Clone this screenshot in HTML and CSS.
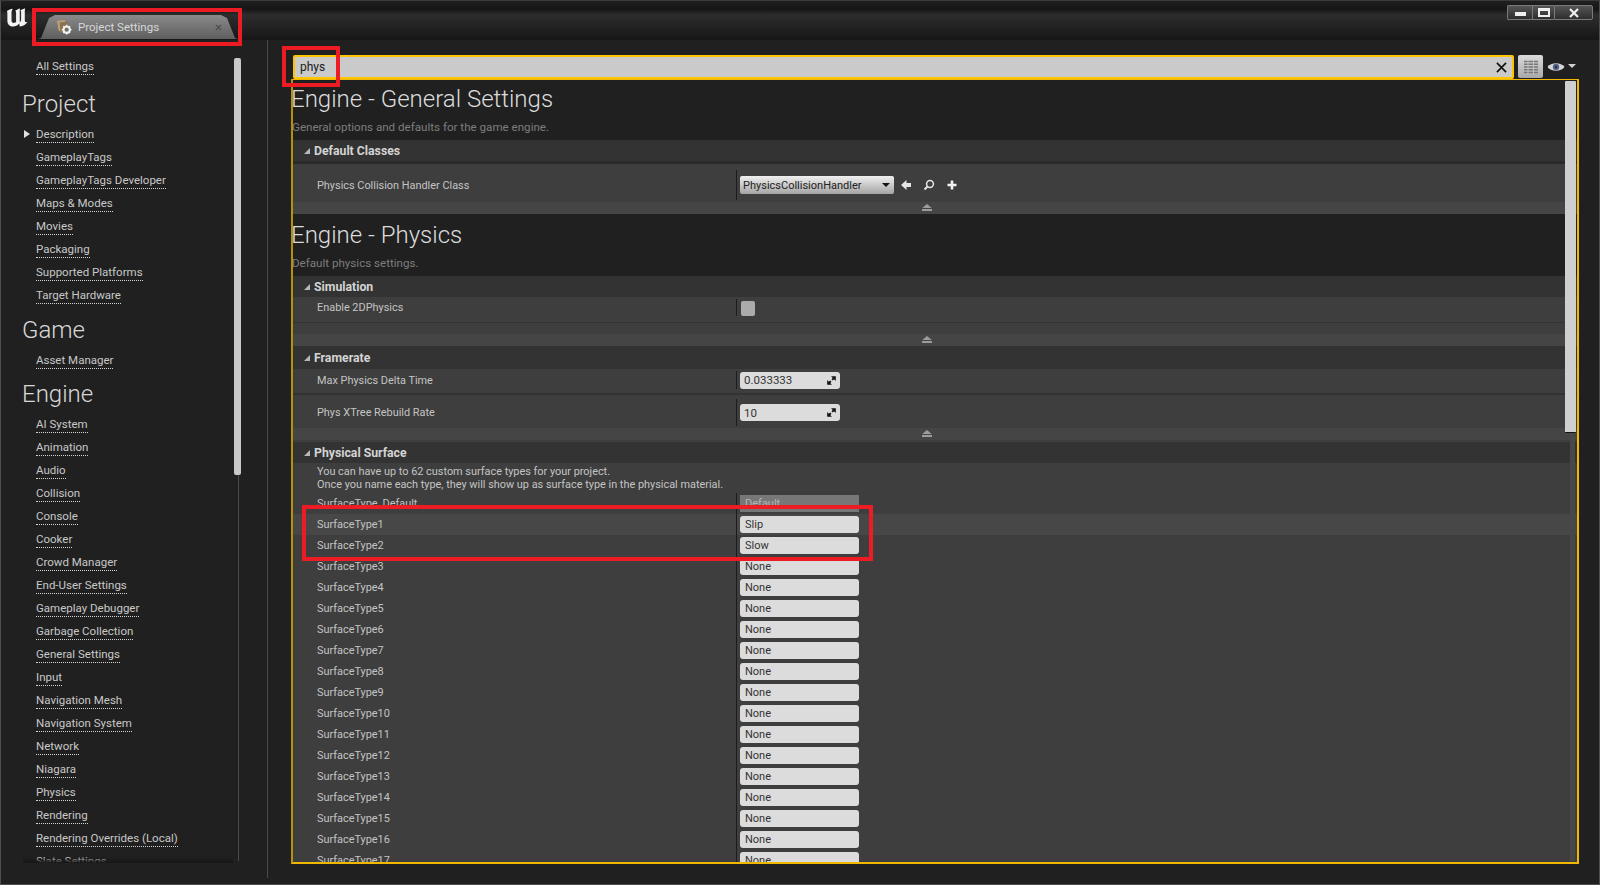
FILE: index.html
```html
<!DOCTYPE html>
<html lang="en">
<head>
<meta charset="utf-8">
<title>Project Settings</title>
<link rel="stylesheet" href="styles.css">
</head>
<body>
<div class="window">
  <header class="titlebar">
    <svg class="logo" viewBox="0 0 24 20"><path d="M1 3C3 1.500 5 1 7.500 0.500C6.500 2 6 3 6 5V13C6 15 7 16 8.500 16C9.500 16 10.500 15.500 11 15V5C11 3.500 10.500 3 10 2.500L15 0V15.500C16 14.500 16.500 13.500 16.500 12V4C16.500 3 16 2.500 15.500 2L21 0C20.500 1.500 20.500 3 20.500 5V13C20.500 15 21.500 15.500 23.500 15C22 17.500 19 19.500 15 19.800L14.500 16.500C13 18.500 10 19.800 7.500 19.800C3.500 19.800 1.500 17 1.500 13.500V6C1.500 5 1.500 4 1 3Z" fill="#f4f4f4"/></svg>
    <div class="tab">
      <svg class="tab-icon" viewBox="0 0 18 18">
        <path d="M1 2L10 1L14 6L13 10L6 16L3 13Z" fill="#8a7350"/>
        <path d="M1 2L10 1L11 3L4 4L5 14L3 13Z" fill="#b8a27c"/>
        <circle cx="12" cy="12" r="3.600" fill="none" stroke="#f2f2f2" stroke-width="2.400"/>
        <path d="M12 6.500V8M12 16V17.500M6.500 12H8M16 12H17.500M8.200 8.200L9.200 9.200M14.800 14.800L15.800 15.800M15.800 8.200L14.800 9.200M9.200 14.800L8.200 15.800" stroke="#f2f2f2" stroke-width="1.500"/>
      </svg>
      <span class="tab-label">Project Settings</span>
      <svg class="tab-close" viewBox="0 0 8 8"><path d="M1 1L7 7M7 1L1 7" stroke="#4a4a4a" stroke-width="1.200"/></svg>
    </div>
    <div class="window-controls">
      <div class="wc wc-min"><span class="min-glyph"></span></div>
      <div class="wc wc-max"><span class="max-glyph"></span></div>
      <div class="wc wc-close"><svg viewBox="0 0 10 10" class="close-glyph"><path d="M1 1L9 9M9 1L1 9" stroke="#f0f0f0" stroke-width="2.200"/></svg></div>
    </div>
  </header>

  <div class="body">
    <aside class="sidebar">
      <nav class="nav">
        <a class="nav-item">All Settings</a>
        <h2 class="nav-heading nav-heading-first">Project</h2>
        <a class="nav-item nav-current">Description</a>
        <a class="nav-item">GameplayTags</a>
        <a class="nav-item">GameplayTags Developer</a>
        <a class="nav-item">Maps &amp; Modes</a>
        <a class="nav-item">Movies</a>
        <a class="nav-item">Packaging</a>
        <a class="nav-item">Supported Platforms</a>
        <a class="nav-item">Target Hardware</a>
        <h2 class="nav-heading">Game</h2>
        <a class="nav-item">Asset Manager</a>
        <h2 class="nav-heading nav-heading-tight">Engine</h2>
        <a class="nav-item">AI System</a>
        <a class="nav-item">Animation</a>
        <a class="nav-item">Audio</a>
        <a class="nav-item">Collision</a>
        <a class="nav-item">Console</a>
        <a class="nav-item">Cooker</a>
        <a class="nav-item">Crowd Manager</a>
        <a class="nav-item">End-User Settings</a>
        <a class="nav-item">Gameplay Debugger</a>
        <a class="nav-item">Garbage Collection</a>
        <a class="nav-item">General Settings</a>
        <a class="nav-item">Input</a>
        <a class="nav-item">Navigation Mesh</a>
        <a class="nav-item">Navigation System</a>
        <a class="nav-item">Network</a>
        <a class="nav-item">Niagara</a>
        <a class="nav-item">Physics</a>
        <a class="nav-item">Rendering</a>
        <a class="nav-item">Rendering Overrides (Local)</a>
        <a class="nav-item">Slate Settings</a>
      </nav>
      <div class="nav-track"><div class="nav-thumb"></div></div>
    </aside>

    <main class="content">
      <div class="search-row">
        <div class="search">
          <span class="search-text">phys</span>
          <svg class="search-clear" viewBox="0 0 12 12"><path d="M1 1L11 11M11 1L1 11" stroke="#111" stroke-width="1.800"/></svg>
        </div>
        <div class="grid-btn">
          <svg viewBox="0 0 14 14" class="grid-glyph"><path d="M0 1.500H14M0 4.300H14M0 7H14M0 9.800H14M0 12.500H14" stroke="#777" stroke-width="1.600"/><path d="M4 0V14M9.500 0V14" stroke="#ccc" stroke-width="0.800"/></svg>
        </div>
        <svg class="eye" viewBox="0 0 18 10"><path d="M0.500 5C4 0 14 0 17.500 5C14 10 4 10 0.500 5Z" fill="#d6d6d6"/><circle cx="9" cy="5" r="3.200" fill="#56648a"/><circle cx="9" cy="5" r="1.200" fill="#20283c"/></svg>
        <span class="eye-caret"></span>
      </div>

      <div class="panel">
        <section class="category category-first">
          <h1 class="cat-title">Engine - General Settings</h1>
          <p class="cat-sub">General options and defaults for the game engine.</p>
        </section>
        <div class="group-head group-head-shadow"><span class="caret"></span>Default Classes</div>
        <div class="row row-class">
          <div class="label">Physics Collision Handler Class</div>
          <div class="value">
            <div class="combo"><span>PhysicsCollisionHandler</span><i class="combo-caret"></i></div>
            <svg class="mini" viewBox="0 0 12 12"><path d="M1 6L6.500 1V4H11V8H6.500V11Z" fill="#e6e6e6"/></svg>
            <svg class="mini" viewBox="0 0 12 12"><circle cx="7" cy="5" r="3.400" fill="none" stroke="#e6e6e6" stroke-width="1.500"/><path d="M4.500 7.500L1.500 10.500" stroke="#e6e6e6" stroke-width="2"/></svg>
            <svg class="mini" viewBox="0 0 12 12"><path d="M6 1.500V10.500M1.500 6H10.500" stroke="#f2f2f2" stroke-width="2.600"/></svg>
          </div>
        </div>
        <div class="expander"><span class="collapse-glyph"></span></div>

        <section class="category">
          <h1 class="cat-title">Engine - Physics</h1>
          <p class="cat-sub">Default physics settings.</p>
        </section>
        <div class="group-head"><span class="caret"></span>Simulation</div>
        <div class="row row-check">
          <div class="label">Enable 2DPhysics</div>
          <div class="value"><span class="checkbox"></span></div>
        </div>
        <div class="row-gap"></div>
        <div class="expander"><span class="collapse-glyph"></span></div>

        <div class="group-head group-head-tall"><span class="caret"></span>Framerate</div>
        <div class="row row-num row-lined">
          <div class="label">Max Physics Delta Time</div>
          <div class="value"><div class="num"><span>0.033333</span><svg class="num-glyph" viewBox="0 0 10 10"><path d="M9.800 0.200V5.500L7.900 3.600L6.500 5L5 3.500L6.400 2.100L4.500 0.200ZM0.200 9.800V4.500L2.100 6.400L3.500 5L5 6.500L3.600 7.900L5.500 9.800Z" fill="#111"/></svg></div></div>
        </div>
        <div class="row row-num-tall">
          <div class="label">Phys XTree Rebuild Rate</div>
          <div class="value"><div class="num"><span>10</span><svg class="num-glyph" viewBox="0 0 10 10"><path d="M9.800 0.200V5.500L7.900 3.600L6.500 5L5 3.500L6.400 2.100L4.500 0.200ZM0.200 9.800V4.500L2.100 6.400L3.500 5L5 6.500L3.600 7.900L5.500 9.800Z" fill="#111"/></svg></div></div>
        </div>
        <div class="expander expander-spaced"><span class="collapse-glyph"></span></div>

        <div class="group-head"><span class="caret"></span>Physical Surface</div>
        <div class="note">You can have up to 62 custom surface types for your project.<br>Once you name each type, they will show up as surface type in the physical material.</div>
        <div class="row row-surface"><div class="label">SurfaceType_Default</div><div class="value"><div class="field field-off">Default</div></div></div>
        <div class="row row-surface row-hover"><div class="label">SurfaceType1</div><div class="value"><div class="field">Slip</div></div></div>
        <div class="row row-surface"><div class="label">SurfaceType2</div><div class="value"><div class="field">Slow</div></div></div>
        <div class="row row-surface"><div class="label">SurfaceType3</div><div class="value"><div class="field">None</div></div></div>
        <div class="row row-surface"><div class="label">SurfaceType4</div><div class="value"><div class="field">None</div></div></div>
        <div class="row row-surface"><div class="label">SurfaceType5</div><div class="value"><div class="field">None</div></div></div>
        <div class="row row-surface"><div class="label">SurfaceType6</div><div class="value"><div class="field">None</div></div></div>
        <div class="row row-surface"><div class="label">SurfaceType7</div><div class="value"><div class="field">None</div></div></div>
        <div class="row row-surface"><div class="label">SurfaceType8</div><div class="value"><div class="field">None</div></div></div>
        <div class="row row-surface"><div class="label">SurfaceType9</div><div class="value"><div class="field">None</div></div></div>
        <div class="row row-surface"><div class="label">SurfaceType10</div><div class="value"><div class="field">None</div></div></div>
        <div class="row row-surface"><div class="label">SurfaceType11</div><div class="value"><div class="field">None</div></div></div>
        <div class="row row-surface"><div class="label">SurfaceType12</div><div class="value"><div class="field">None</div></div></div>
        <div class="row row-surface"><div class="label">SurfaceType13</div><div class="value"><div class="field">None</div></div></div>
        <div class="row row-surface"><div class="label">SurfaceType14</div><div class="value"><div class="field">None</div></div></div>
        <div class="row row-surface"><div class="label">SurfaceType15</div><div class="value"><div class="field">None</div></div></div>
        <div class="row row-surface"><div class="label">SurfaceType16</div><div class="value"><div class="field">None</div></div></div>
        <div class="row row-surface"><div class="label">SurfaceType17</div><div class="value"><div class="field">None</div></div></div>
        <div class="panel-track"></div>
        <div class="panel-thumb"></div>
      </div>
    </main>
  </div>

  <div class="callout callout-tab"></div>
  <div class="callout callout-search"></div>
  <div class="callout callout-rows"></div>
</div>
</body>
</html>
```

FILE: styles.css
```css
* { box-sizing: border-box; }

html, body {
  margin: 0;
  height: 885px;
  overflow: hidden;
  background: #1f1f1f;
  font-family: Roboto, "Liberation Sans", sans-serif;
}

.window {
  position: relative;
  width: 1600px;
  height: 885px;
  display: flex;
  flex-direction: column;
  background: #202020;
  border: 1px solid #4e4e4e;
  border-top-color: #3a3a3a;
  overflow: hidden;
}

/* Title bar */
.titlebar {
  height: 39px;
  flex: none;
  display: flex;
  align-items: flex-start;
  background: linear-gradient(#202020 0, #161616 8px, #2d2d2d 14px, #171717 38px);
}

.logo {
  width: 22px;
  height: 19px;
  margin: 7px 0 0 5px;
  flex: none;
}

.tab {
  width: 200px;
  height: 24px;
  margin: 14px 0 0 10px;
  flex: none;
  display: flex;
  align-items: center;
  padding: 0 12px 0 18px;
  background: linear-gradient(#8a8a8a, #5e5e5e);
  clip-path: polygon(0 100%, 3px 96%, 11px 12%, 17px 0, 183px 0, 189px 12%, 197px 96%, 100% 100%);
}

.tab-icon { width: 16px; height: 16px; flex: none; }

.tab-label {
  margin-left: 6px;
  flex: 1;
  font-size: 11.500px;
  color: #d8d8d8;
}

.tab-close { width: 7px; height: 7px; flex: none; margin-right: 4px; }

.window-controls {
  margin: 4px 6px 0 auto;
  display: flex;
  height: 15px;
  flex: none;
}

.wc {
  display: flex;
  align-items: center;
  justify-content: center;
  background: linear-gradient(#555, #2e2e2e);
  border: 1px solid #7a7a7a;
  border-right-width: 0;
}

.wc-min { width: 25px; border-radius: 2px 0 0 2px; }
.wc-max { width: 22px; }
.wc-close { width: 39px; border-right-width: 1px; border-radius: 0 2px 2px 0; }

.min-glyph { width: 11px; height: 4px; background: #f0f0f0; margin-top: 2px; }
.max-glyph { width: 12px; height: 9px; border: 2px solid #f0f0f0; border-top-width: 3px; }
.close-glyph { width: 10px; height: 10px; }

/* Layout */
.body {
  flex: 1;
  min-height: 0;
  display: flex;
}

.sidebar {
  width: 267px;
  flex: none;
  height: 838px;
  display: flex;
  align-items: flex-start;
  border-right: 1px solid #4a4a4a;
}

.nav {
  width: 232px;
  height: 823px;
  flex: none;
  padding: 15px 0 0 35px;
  overflow: hidden;
  position: relative;
}

.nav::after {
  content: "";
  position: absolute;
  left: 22px;
  right: 0;
  bottom: 0;
  height: 6px;
  background: linear-gradient(rgba(32,32,32,0), #161616);
}

.nav-item {
  display: block;
  width: max-content;
  height: 23px;
  line-height: 23px;
  font-size: 11.500px;
  color: #c8c8c8;
  position: relative;
}

.nav-item::after {
  content: "";
  position: absolute;
  left: 0;
  right: 0;
  bottom: 3px;
  border-bottom: 1px dotted #d4d4d4;
}

.nav-current::before {
  content: "";
  position: absolute;
  left: -12px;
  top: 7px;
  border-left: 6px solid #e0e0e0;
  border-top: 4px solid transparent;
  border-bottom: 4px solid transparent;
}

.nav-heading {
  margin: 0 0 0 -14px;
  padding: 8px 0 3px;
  line-height: 31px;
  font-size: 24px;
  font-weight: 300;
  color: #d8d8d8;
}

.nav-heading-first { padding-top: 10.500px; }
.nav-heading-tight { padding-top: 7px; }

.nav-track {
  position: relative;
  width: 1px;
  height: 803px;
  margin: 18px 0 0 5px;
  background: #4a4a4a;
  flex: none;
}

.nav-thumb {
  position: absolute;
  left: -4px;
  top: 0;
  width: 7px;
  height: 417px;
  background: #c8c8c8;
  border-radius: 2px;
}

.content {
  flex: 1;
  min-width: 0;
  display: flex;
  flex-direction: column;
  padding: 15px 20px 0 23px;
}

.search-row {
  height: 24px;
  flex: none;
  display: flex;
  align-items: flex-start;
  padding-left: 2px;
}

.search {
  width: 1221px;
  height: 24px;
  flex: none;
  display: flex;
  align-items: center;
  justify-content: space-between;
  padding: 0 5px;
  background: #cacaca;
  border: 2px solid #ffc400;
  border-radius: 2px;
  position: relative;
  z-index: 1;
}

.search-text { font-size: 12px; color: #1a1a1a; }
.search-clear { width: 11px; height: 11px; flex: none; }

.grid-btn {
  width: 25px;
  height: 23px;
  margin-left: 4px;
  flex: none;
  display: flex;
  align-items: center;
  justify-content: center;
  background: linear-gradient(#dcdcdc, #a8a8a8);
  border-radius: 2px;
}

.grid-glyph { width: 14px; height: 14px; }
.eye { width: 18px; height: 10px; margin: 7px 0 0 4px; flex: none; }

.eye-caret {
  margin: 9px 0 0 3px;
  border-top: 4px solid #d0d0d0;
  border-left: 4px solid transparent;
  border-right: 4px solid transparent;
}

.panel {
  position: relative;
  width: 1288px;
  height: 785px;
  flex: none;
  border: 2px solid #f0b800;
  border-left-color: #b8900a;
  border-top-width: 1px;
  background: #3e3e3e;
  overflow: hidden;
}

.category {
  background: #202020;
  padding: 6px 0 6px;
  height: 62px;
}

.category-first { padding-top: 4px; height: 60px; }

.cat-title {
  margin: 0 0 6px -2px;
  line-height: 30px;
  font-size: 24px;
  font-weight: 300;
  color: #dcdcdc;
}

.cat-sub {
  margin: 0 0 0 -1px;
  line-height: 14px;
  font-size: 11.600px;
  color: #7d7d7d;
}

.group-head {
  height: 21px;
  padding-left: 11px;
  display: flex;
  align-items: center;
  background: #333;
  font-size: 12.250px;
  font-weight: 700;
  color: #d4d4d4;
}

.group-head-shadow { height: 24px; border-bottom: 3px solid #2b2b2b; }
.group-head-tall { height: 23px; }

.caret {
  width: 0;
  height: 0;
  margin-right: 4px;
  border-bottom: 6px solid #b8b8b8;
  border-left: 6px solid transparent;
}

.row {
  display: flex;
  align-items: stretch;
  background: #3e3e3e;
}

.row-class { height: 38px; padding-top: 4px; }
.row-check { height: 26px; padding-bottom: 4px; border-bottom: 1px solid #333; }
.row-num { height: 26px; padding-bottom: 2px; }
.row-lined { border-bottom: 2px solid #333; }
.row-num-tall { height: 33px; padding-top: 2px; }
.row-surface { height: 21px; }
.row-hover { background: #474747; }

.row-gap { height: 11px; background: #3e3e3e; }

.label {
  width: 443px;
  flex: none;
  padding-left: 24px;
  display: flex;
  align-items: center;
  font-size: 10.900px;
  color: #c4c4c4;
  white-space: nowrap;
}

.value {
  flex: 1;
  display: flex;
  align-items: center;
  gap: 0;
  padding-left: 3px;
  border-left: 1px solid #1c1c1c;
}

.row-class .value, .row-num .value, .row-num-tall .value, .row-check .value {
  margin: 2px 0;
}

.combo {
  width: 154px;
  height: 18px;
  display: flex;
  align-items: center;
  justify-content: space-between;
  padding: 0 4px 0 3px;
  border-radius: 2px;
  background: linear-gradient(#f0f0f0, #a4a4a4);
  font-size: 11px;
  color: #222;
}

.combo-caret {
  border-top: 4px solid #111;
  border-left: 4px solid transparent;
  border-right: 4px solid transparent;
}

.mini { width: 12px; height: 12px; margin-left: 6px; flex: none; }
.mini + .mini { margin-left: 11px; }

.checkbox {
  width: 14px;
  height: 15px;
  margin: 2px 0 0 1px;
  background: #ababab;
  border-radius: 2px;
}

.num {
  width: 100px;
  height: 17px;
  padding: 0 4px;
  display: flex;
  align-items: center;
  justify-content: space-between;
  background: #dcdcdc;
  border-radius: 3px;
  font-size: 11.500px;
  color: #333;
}

.num-glyph { width: 9px; height: 9px; flex: none; }

.expander {
  height: 12px;
  padding: 0 0 1px 629px;
  background: #454545;
  display: flex;
  align-items: center;
}

.expander-spaced { margin-bottom: 2px; }

.collapse-glyph {
  width: 10px;
  height: 7px;
  background: linear-gradient(#9c9c9c 0 4px, transparent 4px 5px, #9c9c9c 5px);
  clip-path: polygon(50% 0, 100% 60%, 100% 100%, 0 100%, 0 60%);
}

.note {
  height: 30px;
  padding: 2px 0 0 24px;
  line-height: 13px;
  font-size: 10.900px;
  color: #c4c4c4;
}

.field {
  width: 119px;
  height: 17px;
  padding: 0 5px;
  display: flex;
  align-items: center;
  background: #dcdcdc;
  border-radius: 3px;
  font-size: 11px;
  color: #333;
}

.field-off {
  background: #777;
  color: #b4b4b4;
  border-radius: 0;
}

.panel-track {
  position: absolute;
  top: 1px;
  bottom: 1px;
  right: 2px;
  width: 5px;
  background: #484848;
}

.panel-thumb {
  position: absolute;
  top: 1px;
  right: 1px;
  width: 11px;
  height: 352px;
  background: #cfcfcf;
  border-radius: 1px;
  border-bottom: 1px solid #111;
}

/* Red annotation boxes drawn over the screenshot */
.callout {
  position: absolute;
  border: 4px solid #ed1c24;
  z-index: 5;
}

.callout-tab { left: 31px; top: 7px; width: 210px; height: 38px; }
.callout-search { left: 281px; top: 45px; width: 58px; height: 41px; }
.callout-rows { left: 301px; top: 504px; width: 571px; height: 56px; }
```
